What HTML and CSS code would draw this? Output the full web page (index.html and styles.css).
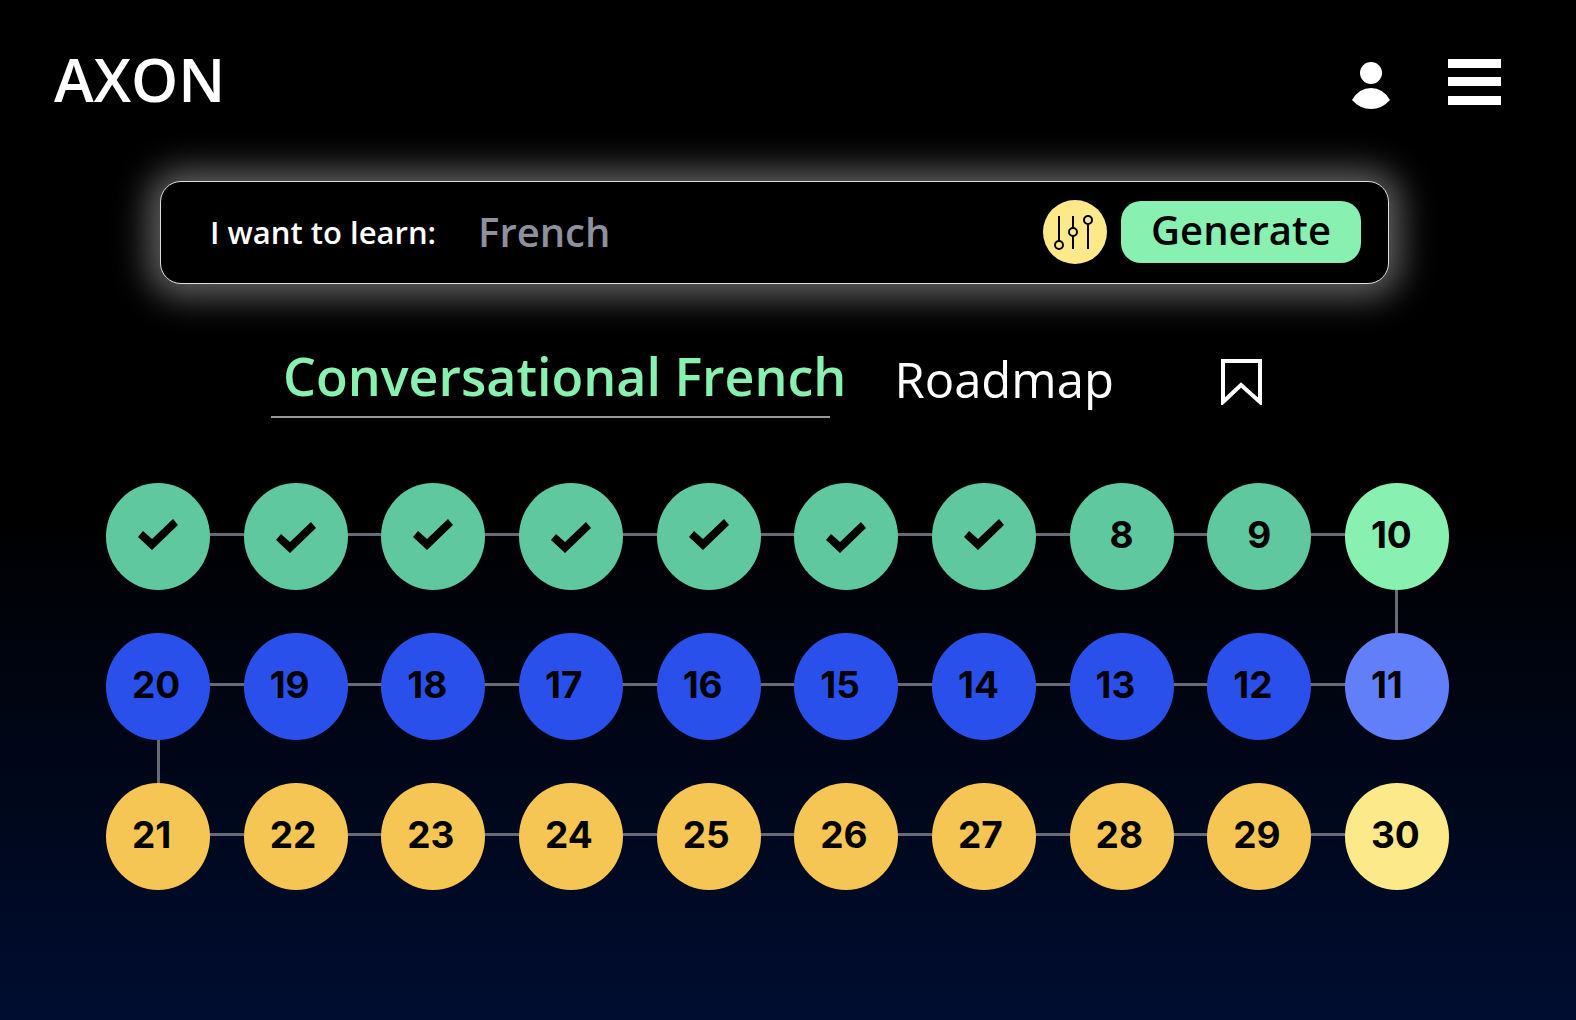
FILE: index.html
```html
<!DOCTYPE html>
<html lang="en">
<head>
	<title>Axon - Conversational French</title>
	<meta charset="utf-8">
	<meta name="viewport" content="width=device-width, initial-scale=1">
	<link rel="stylesheet" href="styles.css">
</head>
<body>
	<header>
		<a class="logo" href="#">AXON</a>
		<nav>
			<button class="icon" type="button" aria-label="Account">
				<svg width="40" height="54" viewBox="0 0 40 54">
					<circle cx="20" cy="18" r="11"/>
					<path d="M1 45Q8 33 20 33T39 45Q31 54 20 54T1 45Z"/>
				</svg>
			</button>
			<button class="icon" type="button" aria-label="Menu">
				<svg width="53" height="46" viewBox="0 0 53 46">
					<path d="M0 0H53V9H0ZM0 18H53V27H0ZM0 37H53V46H0Z"/>
				</svg>
			</button>
		</nav>
	</header>

	<main>
		<form class="search">
			<label for="topic">I want to learn:</label>
			<input id="topic" type="text" placeholder="French">
			<button class="filter" type="button" aria-label="Options">
				<svg width="40" height="36" viewBox="0 0 40 36">
					<path d="M4 2V27M18 2V14M18 22V35M33 10V35"/>
					<circle cx="4" cy="31" r="4"/>
					<circle cx="18" cy="18" r="4"/>
					<circle cx="33" cy="6" r="4"/>
				</svg>
			</button>
			<button class="generate" type="submit">Generate</button>
		</form>

		<div class="title">
			<h1>Conversational French</h1>
			<h2>Roadmap</h2>
			<button class="icon" type="button" aria-label="Save roadmap">
				<svg width="41" height="46" viewBox="0 0 41 46">
					<path class="line" d="M2 43V2H39V43L20 26Z"/>
				</svg>
			</button>
		</div>

		<svg class="symbols" width="0" height="0">
			<symbol id="check" viewBox="0 0 40 31">
				<path d="M35 0L40 6L14 31L0 18L5 12L14 20Z"/>
			</symbol>
		</svg>

		<div class="roadmap">
			<ol class="days green">
				<li><a href="#" aria-label="Day 1, done"><svg><use href="#check"/></svg></a></li>
				<li><a href="#" aria-label="Day 2, done"><svg><use href="#check"/></svg></a></li>
				<li><a href="#" aria-label="Day 3, done"><svg><use href="#check"/></svg></a></li>
				<li><a href="#" aria-label="Day 4, done"><svg><use href="#check"/></svg></a></li>
				<li><a href="#" aria-label="Day 5, done"><svg><use href="#check"/></svg></a></li>
				<li><a href="#" aria-label="Day 6, done"><svg><use href="#check"/></svg></a></li>
				<li><a href="#" aria-label="Day 7, done"><svg><use href="#check"/></svg></a></li>
				<li><a href="#">8</a></li>
				<li><a href="#">9</a></li>
				<li><a class="last" href="#">10</a></li>
			</ol>
			<div class="turn right"></div>
			<!-- this row runs right to left -->
			<ol class="days blue">
				<li><a class="last" href="#">11</a></li>
				<li><a href="#">12</a></li>
				<li><a href="#">13</a></li>
				<li><a href="#">14</a></li>
				<li><a href="#">15</a></li>
				<li><a href="#">16</a></li>
				<li><a href="#">17</a></li>
				<li><a href="#">18</a></li>
				<li><a href="#">19</a></li>
				<li><a href="#">20</a></li>
			</ol>
			<div class="turn"></div>
			<ol class="days yellow">
				<li><a href="#">21</a></li>
				<li><a href="#">22</a></li>
				<li><a href="#">23</a></li>
				<li><a href="#">24</a></li>
				<li><a href="#">25</a></li>
				<li><a href="#">26</a></li>
				<li><a href="#">27</a></li>
				<li><a href="#">28</a></li>
				<li><a href="#">29</a></li>
				<li><a class="last" href="#">30</a></li>
			</ol>
		</div>
	</main>
</body>
</html>
```
FILE: styles.css
```css
* {
	box-sizing: border-box;
}
body {
	margin: 0;
	min-height: 100vh;
	background: linear-gradient(#000 50%, #000d30) no-repeat #000d30;
	color: #fff;
	font-family: "Open Sans", "Noto Sans", sans-serif;
}
button {
	padding: 0;
	border: 0;
	cursor: pointer;
}
svg {
	display: block;
}

/* header */
header {
	display: flex;
	justify-content: space-between;
	padding: 49px 75px 0 54px;
}
.logo {
	color: #fff;
	font-size: 60px;
	font-weight: 600;
	line-height: 60px;
	text-decoration: none;
}
nav {
	display: flex;
	align-items: center;
	gap: 57px;
	padding-top: 6px;
}
.icon {
	background: none;
	fill: #fff;
}
.line {
	fill: none;
	stroke: #fff;
	stroke-width: 4;
}

/* search bar */
.search {
	display: flex;
	align-items: center;
	margin: 72px 187px 0 160px;
	padding: 18px 27px 19px 49px;
	border: 1px solid #ddd;
	border-radius: 21px;
	background: #000;
	box-shadow: 0 1px 34px 12px rgba(255,255,255,.38);
}
.search label {
	font-size: 31px;
	font-weight: 600;
	white-space: nowrap;
}
.search input {
	flex: 1;
	min-width: 0;
	margin: 0 16px 0 42px;
	padding: 0;
	border: 0;
	outline: 0;
	background: none;
	color: #8e909d;
	font: 600 40px/60px "Open Sans", sans-serif;
}
.search input::placeholder {
	color: #8e909d;
}
.filter {
	display: flex;
	align-items: center;
	justify-content: center;
	width: 64px;
	height: 64px;
	margin-right: 14px;
	border-radius: 50%;
	background: #fce98a;
}
.filter svg {
	fill: none;
	stroke: #000;
	stroke-width: 2;
	overflow: visible;
}
.generate {
	width: 240px;
	height: 62px;
	padding-bottom: 4px;
	border-radius: 20px;
	background: #88f0b1;
	color: #000;
	font: 600 40px/58px "Open Sans", sans-serif;
}

/* title */
.title {
	display: flex;
	align-items: flex-start;
	margin: 56px 0 0 271px;
}
.title h1, .title h2 {
	margin: 0;
	white-space: nowrap;
}
.title h1 {
	padding: 0 0 6px 12px;
	background: linear-gradient(#999, #999) left bottom / calc(100% - 16px) 2px no-repeat;
	color: #88f0b1;
	font-size: 52px;
	font-weight: 600;
	line-height: 72px;
}
.title h2 {
	margin: 0 107px 0 48px;
	font-size: 49px;
	font-weight: 400;
	line-height: 78px;
}
.title .icon {
	margin-top: 19px;
}

/* roadmap */
.roadmap {
	margin: 65px 127px 60px 106px;
}
.days {
	display: flex;
	justify-content: space-between;
	margin: 0;
	padding: 0;
	list-style: none;
	background: linear-gradient(#686a75, #686a75) 0 50px / 100% 3px no-repeat;
}
.days a {
	display: flex;
	align-items: center;
	width: 104px;
	height: 107px;
	padding: 0 0 4px 26px;
	border-radius: 50%;
	color: #000;
	font-family: Inter, sans-serif;
	font-size: 37px;
	font-weight: 700;
	text-decoration: none;
}
.days svg {
	width: 40px;
	height: 31px;
}
.green a {
	justify-content: center;
	padding-left: 0;
	background: #5fc89e;
}
.green .last {
	justify-content: flex-start;
	padding-left: 26px;
	background: #88f0b1;
}
.green li:nth-child(even) svg {
	margin-top: 6px;
}
.blue {
	flex-direction: row-reverse;
}
.blue a {
	background: #2a50ec;
}
.blue .last {
	background: #607ff9;
}
.yellow a {
	background: #f6c655;
}
.yellow .last {
	background: #fce98a;
}
.turn {
	width: 3px;
	height: 43px;
	margin: 0 51px;
	background: #686a75;
}
.turn.right {
	margin-left: auto;
}
.symbols {
	position: absolute;
}
```
